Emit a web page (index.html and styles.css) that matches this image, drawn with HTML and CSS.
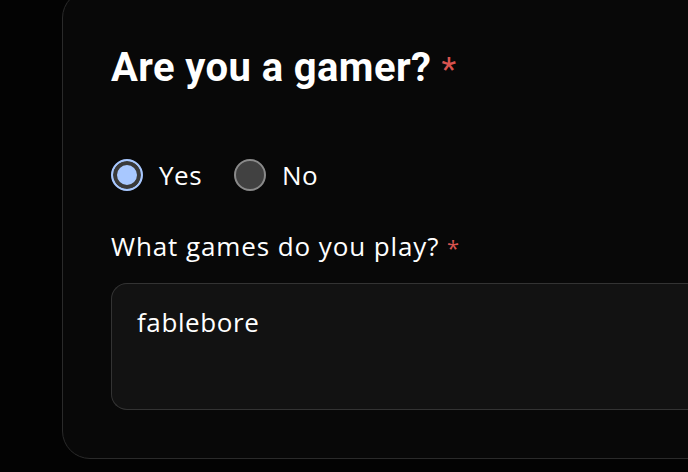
FILE: index.html
```html
<!DOCTYPE html>
<html>
<head>
<meta charset="utf-8">
<link rel="stylesheet" href="styles.css">
</head>
<body>
<div class="card">
  <h1 class="title">Are you a gamer? <span class="req">*</span></h1>
  <div class="radios">
    <label class="opt"><span class="radio checked"></span><span>Yes</span></label>
    <label class="opt"><span class="radio"></span><span>No</span></label>
  </div>
  <div class="field-label">What games do you play? <span class="req">*</span></div>
  <div class="textarea">fablebore</div>
</div>
</body>
</html>
```

FILE: styles.css
```css
html, body {
  margin: 0;
  padding: 0;
  background: #030303;
  height: 100%;
  overflow: hidden;
}
body {
  font-family: "Open Sans", "Noto Sans", sans-serif;
  color: #ffffff;
}
.card {
  margin-top: -10px;
  margin-left: 62px;
  width: 700px;
  box-sizing: border-box;
  background: #080808;
  border: 1px solid #2a2a2a;
  border-radius: 28px;
  padding: 53px 0 48px 48px;
}
.title {
  margin: 0;
  font-family: "Roboto", sans-serif;
  font-size: 40px;
  font-weight: 700;
  line-height: 48px;
  letter-spacing: 0.4px;
}
.req {
  color: #d9534f;
  font-weight: 400;
}
.title .req {
  font-size: 34px;
}
.radios {
  display: flex;
  gap: 32px;
  margin-top: 66px;
  align-items: center;
}
.opt {
  display: flex;
  align-items: center;
  gap: 16px;
  font-size: 26px;
  line-height: 32px;
  letter-spacing: 0.5px;
}
.radio {
  width: 32px;
  height: 32px;
  box-sizing: border-box;
  border-radius: 50%;
  border: 2px solid #8a8a8a;
  background: #414141;
}
.radio.checked {
  border: 2px solid #a8c8ff;
  background: #a8c8ff;
  box-shadow: inset 0 0 0 4px #3a3a3a;
}
.field-label {
  margin-top: 39px;
  font-size: 26px;
  line-height: 32px;
  letter-spacing: 0.9px;
}
.field-label .req {
  font-size: 22px;
}
.textarea {
  margin-top: 20px;
  height: 127px;
  box-sizing: border-box;
  background: #121212;
  border: 1px solid #333333;
  border-right: none;
  border-radius: 16px 0 0 16px;
  padding: 22px 25px;
  font-size: 26px;
  line-height: 32px;
  letter-spacing: 0.6px;
}
```
